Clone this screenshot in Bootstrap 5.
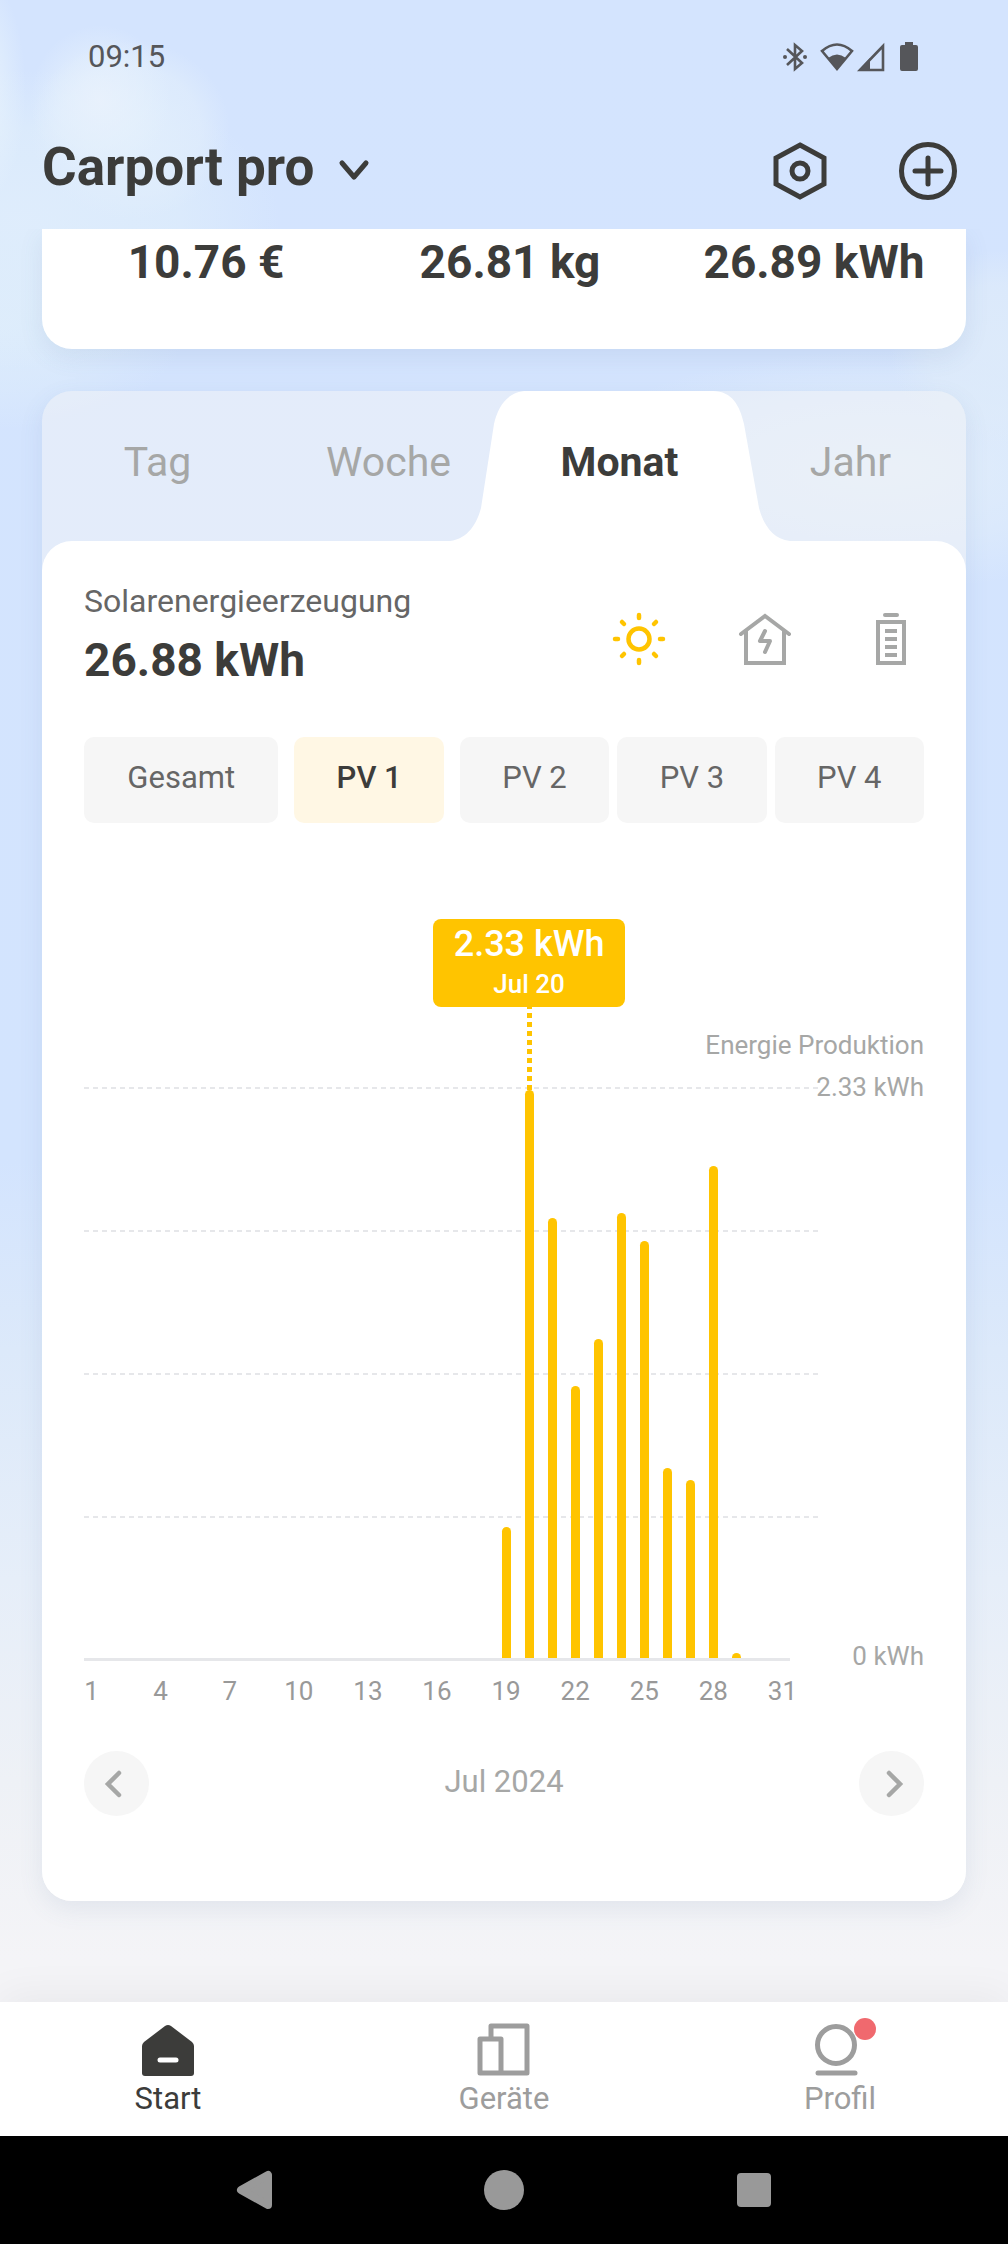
<!DOCTYPE html>
<html lang="de">
<head>
<meta charset="utf-8">
<meta name="viewport" content="width=device-width, initial-scale=1">
<title>Carport pro</title>
<link href="https://cdn.jsdelivr.net/npm/bootstrap@5.3.0/dist/css/bootstrap.min.css" rel="stylesheet">
<style>
  :root { --ink: #3c3c3a; --muted: #a6a7a6; --sun: #ffc400; --line: #e6e7ea; }
  body {
    font-family: Roboto, "Liberation Sans", sans-serif;
    color: var(--ink);
    background:
      radial-gradient(ellipse 70px 75px at 100px 100px, #eaf2fccc, #e6f1fc80 60%, #e6f1fc00),
      radial-gradient(ellipse 100px 90px at 130px 130px, #e2effce6, #e0edfcb3 70%, #e0edfc00),
      radial-gradient(ellipse 50px 120px at -24px 90px, #ecf5fce6, #e6f2fc80 60%, #e6f2fc00),
      radial-gradient(ellipse 260px 150px at 20px 220px, #dfedfcf2, #deedfbb3 60%, #deedfb00),
      radial-gradient(ellipse 190px 110px at 0 320px, #deedfbe6, #deedfb80 60%, #deedfb00),
      radial-gradient(ellipse 110px 100px at 1000px 350px, #deebfae6, #deebfab3 65%, #deebfa00),
      radial-gradient(ellipse 320px 120px at 880px 470px, #e2eefae6, #e2eefa80 60%, #e2eefa00),
      linear-gradient(#d4e4fe 0, #d3e4fe 1160px, #dce9fa 1350px, #e6eef9 1580px, #eef1f6 1780px, #f4f4f7 1960px);
  }
  button { color: inherit; background: none; border: 0; padding: 0; }
  svg { display: block; }
  .status-bar { padding: 36px 87px 0 88px; height: 114px; font-size: 31px; line-height: 42px; color: #55565a; }
  .app-head { padding: 0 42px; height: 115px; }
  .app-head h1 { font-size: 53px; line-height: 106px; font-weight: 700; margin: 0; }
  .head-tools { gap: 70px; padding-top: 27px; }
  .content { padding: 0 42px 101px; }
  .soft-shadow { box-shadow: 0 8px 24px #5068961a; }
  .big-value { font-size: 46px; line-height: 60px; font-weight: 700; }
  .totals { background: #fff; border-radius: 0 0 30px 30px; padding: 3px 0 57px 12px; margin-bottom: 42px; }
  .history { background: #f3f3f680; border-radius: 30px; }
  .range-tabs { height: 150px; font-size: 41px; line-height: 50px; color: var(--muted); }
  .range-tabs button { padding-bottom: 9px; }
  .range-tabs .active { color: var(--ink); font-weight: 700; }
  .tab-shape { position: absolute; left: 50%; bottom: 0; margin-left: -170px; }
  .panel { background: #fff; border-radius: 30px; padding: 39px 42px 85px; }
  .caption { font-size: 32px; line-height: 42px; color: #666; margin-bottom: 8px; }
  .sources { gap: 66px; padding: 28px 3px 0 0; }
  .strings { gap: 8px; margin-top: 47px; font-size: 31px; line-height: 40px; color: #666; }
  .strings button { flex: 149 1 0; height: 86px; padding-bottom: 5px; border-radius: 10px; background: #f6f6f6; }
  .strings .wide { flex-grow: 194; }
  .strings .chosen { background: #fff7e4; color: var(--ink); font-weight: 500; margin: 0 8px; }
  .axis-text { font-size: 26px; line-height: 36px; color: var(--muted); }
  .chart-title { margin: 204px 0 24px; }
  .plot { height: 574px; }
  .grid-line { height: 2px; background: repeating-linear-gradient(90deg, var(--line) 0 5px, transparent 5px 9px); }
  .grid-line:last-child { visibility: hidden; }
  .y-axis { width: 106px; margin: -18px 0 -13px; }
  .day-row { margin-right: 28px; padding: 0 3px; }
  .days { padding-top: 12px; }
  .days-wrap { padding-right: 106px; }
  .bars { height: 574px; border-bottom: 3px solid var(--line); }
  .bar, .day { width: 9px; }
  .bar { background: var(--sun); border-radius: 5px 5px 0 0; }
  .day { color: #999; white-space: nowrap; }
  .tip { position: absolute; bottom: 100%; left: 50%; width: 192px; margin-left: -96px; }
  .tip-box { background: var(--sun); color: #fff; border-radius: 8px; height: 88px; padding-top: 4px; font-weight: 500; }
  .tip-stem { width: 5px; height: 83px; background: repeating-linear-gradient(0deg, var(--sun) 0 5px, transparent 5px 9px); }
  .tip-value { font-size: 36px; line-height: 42px; }
  .tip-date { font-size: 26px; line-height: 38px; }
  .period { margin-top: 42px; font-size: 31px; line-height: 40px; color: var(--muted); }
  .period button { width: 65px; height: 65px; border-radius: 50%; background: #f6f6f6; }
  .period span { padding-bottom: 4px; }
  .tab-bar { height: 134px; padding-top: 19px; background: #fff; box-shadow: 0 -6px 40px #0000000d; font-size: 31px; line-height: 36px; }
  .tab-bar a { color: #9d9d9d; text-decoration: none; }
  .tab-bar a.active { color: var(--ink); }
  .tab-bar svg { overflow: visible; }
  .sys-bar { height: 108px; background: #000; gap: 210px; }
</style>
<script src="https://cdn.jsdelivr.net/npm/bootstrap@5.3.0/dist/js/bootstrap.bundle.min.js"></script>
</head>
<body class="d-flex flex-column min-vh-100">

<div class="status-bar d-flex justify-content-between">
  <span>09:15</span>
  <svg width="138" height="42" viewBox="0 0 138 42" fill="none" stroke="#55565a" aria-hidden="true">
    <path d="M4 13 19 27 12 33V9L19 15 4 29" stroke-width="2.6"/>
    <circle cx="2" cy="21" r="2" fill="#55565a" stroke="none"/><circle cx="22" cy="21" r="2" fill="#55565a" stroke="none"/>
    <path d="M39 15Q54 2 69 15L54 33Z" stroke-width="2.6"/>
    <path d="M45 22Q54 15 63 22L54 33Z" fill="#55565a" stroke="none"/>
    <path d="M100 10V34H77Z" stroke-width="2.6"/>
    <path d="M76 34 87 22V35H75Z" fill="#55565a" stroke="none"/>
    <path d="M122 6h8v3h3q2 0 2 2v22q0 2-2 2h-14q-2 0-2-2V11q0-2 2-2h3z" fill="#55565a" stroke="none"/>
  </svg>
</div>

<header class="app-head d-flex justify-content-between align-items-start">
  <button type="button" class="d-flex align-items-center gap-4">
    <h1>Carport pro</h1>
    <svg width="32" height="32" viewBox="0 0 32 32" fill="none" stroke="#3c3c3a" stroke-width="5" stroke-linecap="round" stroke-linejoin="round" aria-hidden="true"><path d="M4 12 16 26 28 12"/></svg>
  </button>
  <div class="head-tools d-flex pe-2">
    <button type="button" aria-label="Einstellungen"><svg width="56" height="60" viewBox="0 0 56 60" fill="none" stroke="#3c3c3a" stroke-width="5"><path d="M28 4 52 17V43L28 56 4 43V17Z"/><circle cx="28" cy="30" r="8"/></svg></button>
    <button type="button" aria-label="Hinzufügen"><svg width="60" height="60" viewBox="0 0 60 60" fill="none" stroke="#3c3c3a" stroke-width="5" stroke-linecap="round"><circle cx="30" cy="30" r="26.500"/><path d="M30 17V43M17 30H43"/></svg></button>
  </div>
</header>

<main class="content overflow-hidden flex-grow-1">
  <section class="totals soft-shadow d-flex text-center big-value">
    <div class="col-4">10.76 €</div>
    <div class="col-4">26.81 kg</div>
    <div class="col-4">26.89 kWh</div>
  </section>

  <section class="history soft-shadow">
    <div class="range-tabs d-flex" role="tablist">
      <button type="button" role="tab" class="col-3">Tag</button>
      <button type="button" role="tab" class="col-3">Woche</button>
      <button type="button" role="tab" class="col-3 active position-relative" aria-selected="true">
        <svg class="tab-shape" width="340" height="150" viewBox="0 0 340 150" aria-hidden="true"><path fill="#fff" d="M0 150C18 148 27 132 31 117L44 33C48 15 58 0 77 0H263C282 0 290 15 294 33L309 117C313 132 322 148 340 150Z"/></svg>
        <span class="position-relative">Monat</span>
      </button>
      <button type="button" role="tab" class="col-3">Jahr</button>
    </div>

    <div class="panel">
      <div class="d-flex justify-content-between">
        <div>
          <div class="caption">Solarenergieerzeugung</div>
          <div class="big-value">26.88 kWh</div>
        </div>
        <div class="sources d-flex align-items-start">
          <button type="button" aria-label="Solar"><svg width="60" height="60" viewBox="0 0 60 60" fill="none" stroke="#ffc400" stroke-width="4.500" stroke-linecap="round"><circle cx="30" cy="31" r="10.500"/><path d="M30 7v3M30 52v3M6 31h3M51 31h3M13 14l2 2M45 46l2 2M13 48l2-2M45 16l2-2"/></svg></button>
          <button type="button" aria-label="Haus"><svg width="60" height="60" viewBox="0 0 60 60" fill="none" stroke="#a6a7a6" stroke-width="4" stroke-linecap="round"><path d="M6 26 30 8 54 26M11 23V55H49V23"/><path d="M30 23 25 33H35L30 44" stroke-linejoin="round"/></svg></button>
          <button type="button" aria-label="Batterie"><svg width="60" height="60" viewBox="0 0 60 60" fill="none" stroke="#a6a7a6" stroke-width="4"><rect x="17" y="14" width="26" height="41"/><path d="M24 7h12" stroke-linecap="round"/><path d="M24 23h12M24 31h12M24 39h12M24 47h12"/></svg></button>
        </div>
      </div>

      <div class="strings d-flex">
        <button type="button" class="wide">Gesamt</button>
        <button type="button" class="chosen">PV 1</button>
        <button type="button">PV 2</button>
        <button type="button">PV 3</button>
        <button type="button">PV 4</button>
      </div>

      <div class="chart-title axis-text text-end">Energie Produktion</div>
      <div class="d-flex">
        <div class="flex-grow-1">
          <div class="plot position-relative">
            <div class="position-absolute top-0 start-0 w-100 h-100 d-flex flex-column justify-content-between">
              <div class="grid-line"></div><div class="grid-line"></div><div class="grid-line"></div><div class="grid-line"></div><div class="grid-line"></div>
            </div>
            <div class="bars day-row position-relative d-flex justify-content-between align-items-end" id="bars"></div>
          </div>
        </div>
        <div class="y-axis axis-text flex-shrink-0 d-flex flex-column justify-content-between align-items-end text-nowrap">
          <span>2.33 kWh</span>
          <span>0 kWh</span>
        </div>
      </div>
      <div class="days-wrap">
        <div class="day-row days axis-text d-flex justify-content-between" id="days"></div>
      </div>

      <div class="period d-flex justify-content-between align-items-center">
        <button type="button" aria-label="Vorheriger Monat"><svg width="65" height="65" viewBox="0 0 65 65" fill="none" stroke="#a6a7a6" stroke-width="4.500" stroke-linecap="round"><path d="M35 22 24 33 35 44"/></svg></button>
        <span>Jul 2024</span>
        <button type="button" aria-label="Nächster Monat"><svg width="65" height="65" viewBox="0 0 65 65" fill="none" stroke="#a6a7a6" stroke-width="4.500" stroke-linecap="round"><path d="M30 22 41 33 30 44"/></svg></button>
      </div>
    </div>
  </section>
</main>

<nav class="tab-bar d-flex text-center">
  <a href="#" class="col-4 active">
    <svg class="mx-auto" width="60" height="60" viewBox="0 0 60 60" aria-hidden="true"><path d="M27 5Q30 3 33 5L54 21Q56 23 56 25V52Q56 55 53 55H7Q4 55 4 52V25Q4 23 6 21Z" fill="#3c3c3a"/><path d="M22 39H38" stroke="#fff" stroke-width="5" stroke-linecap="round"/></svg>
    Start
  </a>
  <a href="#" class="col-4">
    <svg class="mx-auto" width="60" height="60" viewBox="0 0 60 60" fill="none" stroke="#9d9d9d" stroke-width="5" stroke-linejoin="round" aria-hidden="true"><path d="M17 18V5H53V52H6V18H27V52"/></svg>
    Geräte
  </a>
  <a href="#" class="col-4">
    <svg class="mx-auto" width="60" height="60" viewBox="0 0 60 60" fill="none" stroke="#9d9d9d" stroke-width="5" stroke-linecap="round" aria-hidden="true"><circle cx="26" cy="24" r="18.500"/><path d="M8 52H45"/><circle cx="55" cy="8" r="11" fill="#f0696e" stroke="none"/></svg>
    Profil
  </a>
</nav>
<div class="sys-bar d-flex justify-content-center align-items-center">
  <button type="button" aria-label="Zurück"><svg width="40" height="40" viewBox="0 0 40 40" fill="#999" stroke="#999" stroke-width="8" stroke-linejoin="round"><path d="M7 20 34 5V35Z"/></svg></button>
  <button type="button" aria-label="Startseite"><svg width="40" height="40" viewBox="0 0 40 40" fill="#999"><circle cx="20" cy="20" r="20"/></svg></button>
  <button type="button" aria-label="Übersicht"><svg width="40" height="40" viewBox="0 0 40 40" fill="#999"><rect x="3" y="3" width="34" height="34" rx="4"/></svg></button>
</div>

<script>
  // Bar heights per day, in percent of the plot
  const share = { 19: 23, 20: 99.5, 21: 77, 22: 47.7, 23: 55.8, 24: 78, 25: 73, 26: 33.2, 27: 31.1, 28: 86.2, 29: 0.8 };
  const bars = document.getElementById('bars'), days = document.getElementById('days');
  for (let d = 1; d <= 31; d++) {
    const bar = document.createElement('div');
    bar.className = 'bar position-relative';
    bar.style.height = (share[d] || 0) + '%';
    if (d === 20) bar.innerHTML = '<div class="tip text-center"><div class="tip-box"><div class="tip-value">2.33 kWh</div><div class="tip-date">Jul 20</div></div><div class="tip-stem mx-auto"></div></div>';
    bars.append(bar);
    const day = document.createElement('div');
    day.className = 'day d-flex justify-content-center';
    if (d % 3 === 1) day.innerHTML = '<span>' + d + '</span>';
    days.append(day);
  }
</script>
</body>
</html>
